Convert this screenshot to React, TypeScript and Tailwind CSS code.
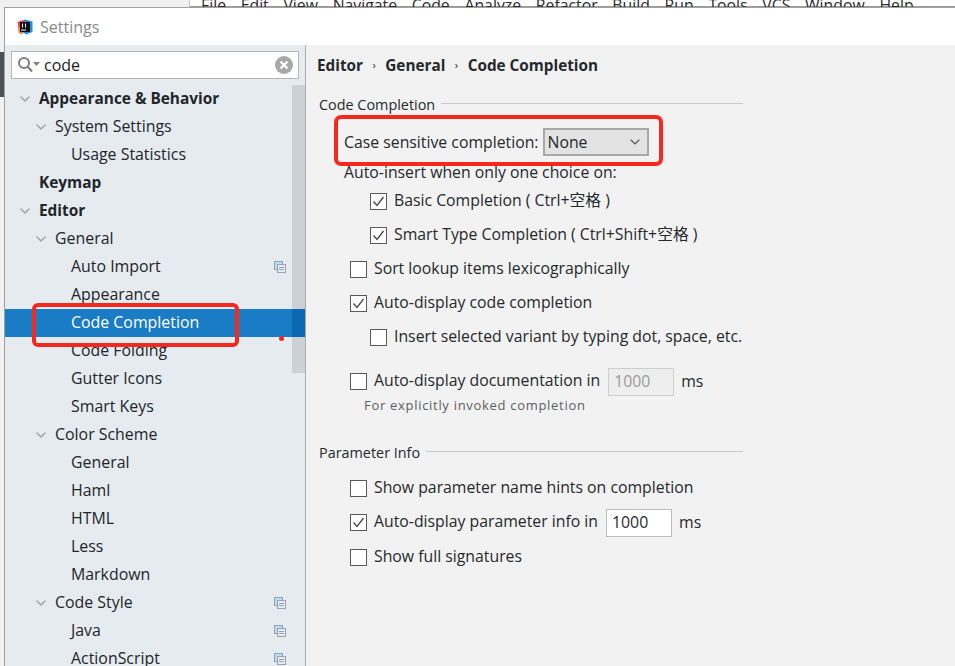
import { ChevronDown } from 'lucide-react';

const FONT = '[font-family:"Open_Sans","Noto_Sans_CJK_SC",sans-serif]';

const MENU = ['File', 'Edit', 'View', 'Navigate', 'Code', 'Analyze', 'Refactor', 'Build', 'Run', 'Tools', 'VCS', 'Window', 'Help'];

const TREE = [
  { label: 'Appearance & Behavior', level: 0, open: true, bold: true },
  { label: 'System Settings', level: 1, open: true },
  { label: 'Usage Statistics', level: 2 },
  { label: 'Keymap', level: 0, bold: true },
  { label: 'Editor', level: 0, open: true, bold: true },
  { label: 'General', level: 1, open: true },
  { label: 'Auto Import', level: 2, copy: true },
  { label: 'Appearance', level: 2 },
  { label: 'Code Completion', level: 2, selected: true },
  { label: 'Code Folding', level: 2 },
  { label: 'Gutter Icons', level: 2 },
  { label: 'Smart Keys', level: 2 },
  { label: 'Color Scheme', level: 1, open: true },
  { label: 'General', level: 2 },
  { label: 'Haml', level: 2 },
  { label: 'HTML', level: 2 },
  { label: 'Less', level: 2 },
  { label: 'Markdown', level: 2 },
  { label: 'Code Style', level: 1, open: true, copy: true },
  { label: 'Java', level: 2, copy: true },
  { label: 'ActionScript', level: 2, copy: true },
];

const LEVEL_PADDING = ['pl-[12px]', 'pl-[28px]', 'pl-[44px]'];

function Logo() {
  return (
    <svg width="16" height="16" viewBox="0 0 16 16">
      <path d="M0.5 3 L8 0.5 L9 8 L5 15 L2 14 Z" fill="#f0455f" />
      <path d="M8 0.5 L15.5 2.5 L15.5 13 L9 15.5 L4 12 Z" fill="#1f8fe8" />
      <path d="M1 8 L2 14 L6 15.5 L4 8 Z" fill="#f58a3c" />
      <rect x="3" y="3" width="10" height="10" fill="#111" />
      <rect x="4" y="10.5" width="5" height="1" fill="#fff" />
      <rect x="5" y="4.5" width="1" height="4" fill="#fff" />
      <rect x="8" y="4.5" width="1" height="4" fill="#fff" />
    </svg>
  );
}

function SearchIcon() {
  return (
    <svg width="24" height="18" viewBox="0 0 24 18" fill="none">
      <circle cx="7" cy="7" r="5" stroke="#7d7d7d" strokeWidth="2" />
      <path d="M10.5 10.5 L15 15.5" stroke="#7d7d7d" strokeWidth="2.2" />
      <path d="M16 6 L23 6 L19.5 10 Z" fill="#7d7d7d" />
    </svg>
  );
}

function ClearIcon() {
  return (
    <svg width="18" height="18" viewBox="0 0 18 18" fill="none">
      <circle cx="9" cy="9" r="9" fill="#a8a8a8" />
      <path d="M5.5 5.5 L12.5 12.5 M12.5 5.5 L5.5 12.5" stroke="#fff" strokeWidth="2.2" />
    </svg>
  );
}

function CopyIcon() {
  return (
    <svg width="12" height="12" viewBox="0 0 12 12" fill="none">
      <rect x="0.5" y="0.5" width="8" height="8" fill="#c5d9ea" stroke="#7fa9cc" />
      <rect x="3.5" y="3.5" width="8" height="8" fill="#e6ebf0" stroke="#9aa3ab" />
      <path d="M5 6.5 H10 M5 8.5 H10" stroke="#9aa3ab" />
    </svg>
  );
}

function TreeRow({ item }: { item: (typeof TREE)[number] }) {
  return (
    <div
      className={`flex h-[28px] shrink-0 items-center pr-[19px] ${LEVEL_PADDING[item.level]} ${
        item.selected ? 'bg-[#1a7cc5] text-white' : 'text-[#22262a]'
      } ${item.bold ? 'text-[15.4px] font-bold' : 'text-[15.9px]'}`}
    >
      <span className="flex w-[22px] shrink-0">
        {item.open && <ChevronDown size={16} strokeWidth={2.4} className="text-[#a3a6a9]" />}
      </span>
      <span className="flex-1 whitespace-nowrap">{item.label}</span>
      {item.copy && <CopyIcon />}
    </div>
  );
}

function Checkbox({ checked }: { checked?: boolean }) {
  return (
    <span className="flex h-[17px] w-[17px] shrink-0 items-center justify-center border border-[#5a5a5a] bg-white">
      {checked && (
        <svg width="13" height="13" viewBox="0 0 13 13" fill="none">
          <path d="M1.5 6.5 L5 10.5 L11.5 2" stroke="#4a4a4a" strokeWidth="1.4" />
        </svg>
      )}
    </span>
  );
}

function CheckRow({
  label,
  checked,
  indent,
  children,
}: {
  label: string;
  checked?: boolean;
  indent?: boolean;
  children?: React.ReactNode;
}) {
  return (
    <div className={`flex h-[34px] items-center ${indent ? 'pl-[64px]' : 'pl-[44px]'}`}>
      <Checkbox checked={checked} />
      <span className="ml-[7px] whitespace-nowrap">{label}</span>
      {children}
    </div>
  );
}

function GroupTitle({ title }: { title: string }) {
  return (
    <div className="flex h-[38px] w-[437px] items-center pl-[13px]">
      <span className="translate-y-[1px] whitespace-nowrap text-[14.4px]">{title}</span>
      <span className="ml-[6px] h-px flex-1 -translate-y-[1px] bg-[#c9c9c9]" />
    </div>
  );
}

function MsField({ value, disabled }: { value: string; disabled?: boolean }) {
  return (
    <>
      <span
        className={`ml-[8px] flex h-[28px] w-[66px] translate-y-[1px] items-center border pl-[5px] ${
          disabled ? 'border-[#cfcfcf] bg-[#eeeeee] text-[#9a9a9a]' : 'border-[#bdbdbd] bg-white'
        }`}
      >
        {value}
      </span>
      <span className="ml-[7px] translate-y-[1px]">ms</span>
    </>
  );
}

export default function App() {
  return (
    <div className={`relative flex h-[666px] w-[955px] flex-col overflow-hidden bg-[#f2f2f2] ${FONT}`}>
      <div className="flex h-[7px] shrink-0 overflow-hidden">
        <div className="h-full w-[190px] border-r border-[#c8c8c8] bg-[#f0f0f0]" />
        <div className="flex flex-1 gap-[14.7px] border-b border-[#9c9c9c] bg-white pl-[11px] text-[15.8px] leading-[20px] text-[#2a2a2a]">
          {MENU.map(m => (
            <span key={m} className="-mt-[5px] whitespace-nowrap">
              {m}
            </span>
          ))}
        </div>
      </div>

      <div className="flex min-h-0 flex-1">
        <div className="w-[4px] shrink-0 bg-[#f2f2f2] pt-[45px]">
          <div className="h-[45px] bg-[#4c5157]" />
        </div>

        <div className="flex min-w-0 flex-1 flex-col border-l border-t border-[#a0a0a0]">
          <div className="flex h-[37px] shrink-0 items-center gap-[7px] bg-white pl-[12px] text-[16px] text-[#8a8a8a]">
            <Logo />
            <span>Settings</span>
          </div>

          <div className="flex min-h-0 flex-1">
            <div className="relative flex w-[301px] shrink-0 flex-col border-r border-[#a9adb2] bg-[#e6ebf0]">
              <div className="flex h-[40px] shrink-0 items-center bg-[#e6ebf0] px-[6px]">
                <div className="flex h-[28px] flex-1 items-center border border-[#b5b5b5] bg-white pl-[5px] pr-[5px] text-[16px] text-[#1c1c1c]">
                  <SearchIcon />
                  <span className="ml-[3px] flex-1">code</span>
                  <ClearIcon />
                </div>
              </div>
              {TREE.map(item => (
                <TreeRow key={item.label + item.level + item.copy} item={item} />
              ))}
              <div className="absolute right-0 top-[40px] h-[288px] w-[13px] bg-[#cdd1d5]">
                <div className="mt-[224px] h-[28px] bg-[#0a69b0]" />
              </div>
            </div>

            <div className="min-w-0 flex-1 text-[15.8px] text-[#26292c]">
              <div className="flex h-[40px] items-center gap-[9.5px] pl-[11px] text-[15.3px] font-bold">
                <span>Editor</span>
                <span className="text-[11px] font-normal">›</span>
                <span>General</span>
                <span className="text-[11px] font-normal">›</span>
                <span>Code Completion</span>
              </div>

              <GroupTitle title="Code Completion" />

              <div className="flex h-[38px] items-center pl-[38px]">
                <span className="translate-y-[1px] whitespace-nowrap">Case sensitive completion:</span>
                <span className="ml-[4px] flex h-[28px] w-[106px] items-center justify-between border-2 border-[#a8a8a8] bg-[#e3e3e3] pl-[3px] pr-[4px]">
                  <span className="translate-y-[1px]">None</span>
                  <ChevronDown size={16} strokeWidth={1.6} className="text-[#555555]" />
                </span>
              </div>
              <div className="flex h-[22px] items-center pl-[38px]">
                <span className="translate-y-[1px]">Auto-insert when only one choice on:</span>
              </div>

              <div className="mt-[1px]">
                <CheckRow indent checked label="Basic Completion ( Ctrl+空格 )" />
                <CheckRow indent checked label="Smart Type Completion ( Ctrl+Shift+空格 )" />
                <CheckRow label="Sort lookup items lexicographically" />
                <CheckRow checked label="Auto-display code completion" />
                <CheckRow indent label="Insert selected variant by typing dot, space, etc." />
              </div>

              <div className="mt-[10px]">
                <CheckRow label="Auto-display documentation in">
                  <MsField disabled value="1000" />
                </CheckRow>
                <div className="flex h-[16px] items-center whitespace-nowrap pl-[58px] text-[13px] tracking-[0.7px] text-[#5c5f62]">
                  For explicitly invoked completion
                </div>
              </div>

              <div className="mt-[19px]">
                <GroupTitle title="Parameter Info" />
                <CheckRow label="Show parameter name hints on completion" />
                <CheckRow checked label="Auto-display parameter info in">
                  <MsField value="1000" />
                </CheckRow>
                <div className="mt-[1px]">
                  <CheckRow label="Show full signatures" />
                </div>
              </div>
            </div>
          </div>
        </div>
      </div>

      {/* red annotation boxes drawn over the settings */}
      <div className="absolute left-[32px] top-[303px] h-[44px] w-[207px] rounded-[6px] border-[4px] border-[#f5281e]" />
      <div className="absolute left-[334px] top-[115px] h-[51px] w-[329px] rounded-[7px] border-[4px] border-[#f5281e]" />
      <div className="absolute left-[279px] top-[336px] h-[5px] w-[5px] rounded-full bg-[#f5281e]" />
    </div>
  );
}
